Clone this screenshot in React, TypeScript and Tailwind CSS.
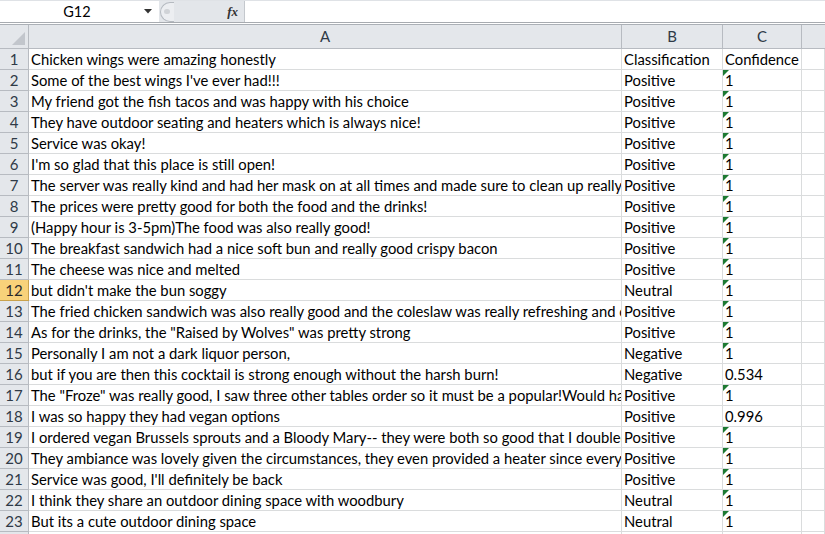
import React from "react";

type Row = { a: string; b: string; c: string; flag?: boolean };

const rows: Row[] = [
  { a: "Chicken wings were amazing honestly", b: "Classification", c: "Confidence" },
  { a: "Some of the best wings I've ever had!!!", b: "Positive", c: "1", flag: true },
  { a: "My friend got the fish tacos and was happy with his choice", b: "Positive", c: "1", flag: true },
  { a: "They have outdoor seating and heaters which is always nice!", b: "Positive", c: "1", flag: true },
  { a: "Service was okay!", b: "Positive", c: "1", flag: true },
  { a: "I'm so glad that this place is still open!", b: "Positive", c: "1", flag: true },
  { a: "The server was really kind and had her mask on at all times and made sure to clean up really well after us", b: "Positive", c: "1", flag: true },
  { a: "The prices were pretty good for both the food and the drinks!", b: "Positive", c: "1", flag: true },
  { a: "(Happy hour is 3-5pm)The food was also really good!", b: "Positive", c: "1", flag: true },
  { a: "The breakfast sandwich had a nice soft bun and really good crispy bacon", b: "Positive", c: "1", flag: true },
  { a: "The cheese was nice and melted", b: "Positive", c: "1", flag: true },
  { a: "but didn't make the bun soggy", b: "Neutral", c: "1", flag: true },
  { a: "The fried chicken sandwich was also really good and the coleslaw was really refreshing and crunchy", b: "Positive", c: "1", flag: true },
  { a: "As for the drinks, the \"Raised by Wolves\" was pretty strong", b: "Positive", c: "1", flag: true },
  { a: "Personally I am not a dark liquor person,", b: "Negative", c: "1", flag: true },
  { a: "but if you are then this cocktail is strong enough without the harsh burn!", b: "Negative", c: "0.534" },
  { a: "The \"Froze\" was really good, I saw three other tables order so it must be a popular!Would have loved to try it", b: "Positive", c: "1", flag: true },
  { a: "I was so happy they had vegan options", b: "Positive", c: "0.996" },
  { a: "I ordered vegan Brussels sprouts and a Bloody Mary-- they were both so good that I doubled up on them", b: "Positive", c: "1", flag: true },
  { a: "They ambiance was lovely given the circumstances, they even provided a heater since everyone was outside", b: "Positive", c: "1", flag: true },
  { a: "Service was good, I'll definitely be back", b: "Positive", c: "1", flag: true },
  { a: "I think they share an outdoor dining space with woodbury", b: "Neutral", c: "1", flag: true },
  { a: "But its a cute outdoor dining space", b: "Neutral", c: "1", flag: true },
  { a: "", b: "", c: "" },
];

const cols = "grid grid-cols-[29px_593px_101px_79px_1fr]";
const cell = "h-[21px] border-r border-b border-[#dadcdd] overflow-hidden whitespace-nowrap pl-[2px] leading-[21px] text-[14.8px] text-black";

export default function App() {
  return (
    <div className="w-[825px] h-[534px] overflow-hidden bg-white font-['Lato',sans-serif] relative">
      {/* formula bar */}
      <div className="h-[23px] flex border-t border-[#dfe2e6] border-b border-b-[#a7abb0]">
        <div className="w-[159px] flex items-center bg-white">
          <span className="flex-1 text-center text-[14.5px] text-black pl-[10px]">G12</span>
          <svg width="8" height="5" viewBox="0 0 8 5" className="mr-[7px]">
            <path d="M0 0h8L4 4.5z" fill="#333" />
          </svg>
        </div>
        <div className="w-[86px] flex items-center bg-[#e3e6ea] border-r border-[#c4c8cd] relative">
          <div className="absolute left-[1px] top-[1px] w-[14px] h-[20px] rounded-l-full border border-r-0 border-[#b5bac0] bg-[#eceef1]">
            <div className="absolute left-[3px] top-[6px] w-[6px] h-[5px] rounded-full bg-[#d0d3d7]" />
          </div>
          <span className="ml-auto mr-[6px] text-[13px] italic font-bold font-['Liberation_Serif',serif] text-[#333]">fx</span>
        </div>
        <div className="flex-1 bg-white" />
      </div>
      <div className="h-[2px] border-b border-[#abb0b6] bg-white" />

      {/* column header */}
      <div className={`${cols} h-[24px] bg-[#e4e7eb] border-b border-[#b7bbc1] text-[15px] text-[#2f3a47]`}>
        <div className="border-r border-[#b7bbc1] relative">
          <svg width="13" height="13" viewBox="0 0 13 13" className="absolute right-[3px] bottom-[3px]">
            <path d="M13 0V13H0z" fill="#c2c6cc" />
          </svg>
        </div>
        <div className="border-r border-[#b7bbc1] flex items-center justify-center">A</div>
        <div className="border-r border-[#b7bbc1] flex items-center justify-center">B</div>
        <div className="border-r border-[#b7bbc1] flex items-center justify-center">C</div>
        <div />
      </div>

      {rows.map((r, i) => {
        const n = i + 1;
        const sel = n === 12;
        return (
          <div key={i} className={cols}>
            <div
              className={`h-[21px] border-r border-b flex items-center justify-center text-[15px] ${
                sel
                  ? "bg-[#f8d27a] border-[#c9a24c] text-[#2b2b2b]"
                  : "bg-[#e4e7eb] border-[#b7bbc1] text-[#2f3a47]"
              }`}
            >
              {n}
            </div>
            <div className={cell}>{r.a}</div>
            <div className={cell}>{r.b}</div>
            <div className={`${cell} relative`}>
              {r.flag && (
                <svg width="6" height="6" viewBox="0 0 6 6" className="absolute left-0 top-0">
                  <path d="M0 0h6L0 6z" fill="#1d7a32" />
                </svg>
              )}
              {r.c}
            </div>
            <div className={cell} />
          </div>
        );
      })}
    </div>
  );
}
